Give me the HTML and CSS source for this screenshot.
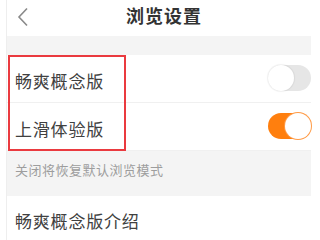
FILE: index.html
```html
<!DOCTYPE html>
<html lang="zh">
<head>
<meta charset="utf-8">
<link rel="stylesheet" href="styles.css">
</head>
<body>
<div class="app">
  <header class="bar">
    <svg class="back" width="12" height="20" viewBox="0 0 12 20"><path d="M10 1.5 L2 10 L10 18.5" fill="none" stroke="#8a8a8a" stroke-width="1.6"/></svg>
    <h1 class="title">浏览设置</h1>
  </header>
  <div class="gap"></div>
  <div class="row">
    <span class="label">畅爽概念版</span>
    <span class="toggle"><span class="knob"></span></span>
  </div>
  <div class="row">
    <span class="label">上滑体验版</span>
    <span class="toggle on"><span class="knob"></span></span>
  </div>
  <div class="hint">关闭将恢复默认浏览模式</div>
  <div class="row last">
    <span class="label">畅爽概念版介绍</span>
  </div>
</div>
<div class="mark"></div>
</body>
</html>
```
FILE: styles.css
```css
html, body {
  margin: 0;
  padding: 0;
  background: #fff;
  overflow: hidden;
  height: 240px;
}
body {
  font-family: "Noto Sans CJK SC", "Noto Sans", sans-serif;
  color: #3a3a3a;
  position: relative;
}
.app {
  margin-left: 6px;
  width: 304px;
  height: 240px;
  border-left: 1px solid #eeeeee;
  background: #fff;
}
.bar {
  height: 36px;
  display: flex;
  align-items: center;
}
.back {
  margin-left: 10px;
  margin-top: -2px;
}
.title {
  margin: -6px 0 0 97px;
  font-size: 18px;
  font-weight: 700;
  color: #333;
  letter-spacing: 1px;
  line-height: 1;
}
.gap {
  height: 19px;
  background: #f4f4f4;
}
.row {
  height: 47px;
  display: flex;
  align-items: center;
  justify-content: space-between;
  padding-left: 8px;
  border-bottom: 1px solid #f0f0f0;
}
.row.last {
  border-bottom: none;
  height: 45px;
}
.label {
  font-size: 17px;
  letter-spacing: 0.8px;
  color: #404040;
  margin-top: 5px;
  line-height: 24px;
}
.toggle {
  width: 43px;
  height: 26px;
  border-radius: 13px;
  background: #e6e6e6;
  position: relative;
  margin-top: -2px;
}
.knob {
  position: absolute;
  top: 0;
  left: 0;
  width: 26px;
  height: 26px;
  border-radius: 50%;
  background: #fff;
  box-shadow: 0 0 1px 1px rgba(0,0,0,0.06);
}
.toggle.on {
  background: #ff7f0e;
}
.toggle.on .knob {
  left: auto;
  right: 0;
  box-shadow: 0 0 0 1px #ff9a45;
}
.hint {
  height: 45px;
  background: #f4f4f4;
  font-size: 13px;
  color: #9d9d9d;
  padding-left: 8px;
  line-height: 38px;
  letter-spacing: 0.5px;
}
.mark {
  position: absolute;
  left: 8px;
  top: 55px;
  width: 114px;
  height: 92px;
  border: 2px solid #ea3a3f;
}
```
